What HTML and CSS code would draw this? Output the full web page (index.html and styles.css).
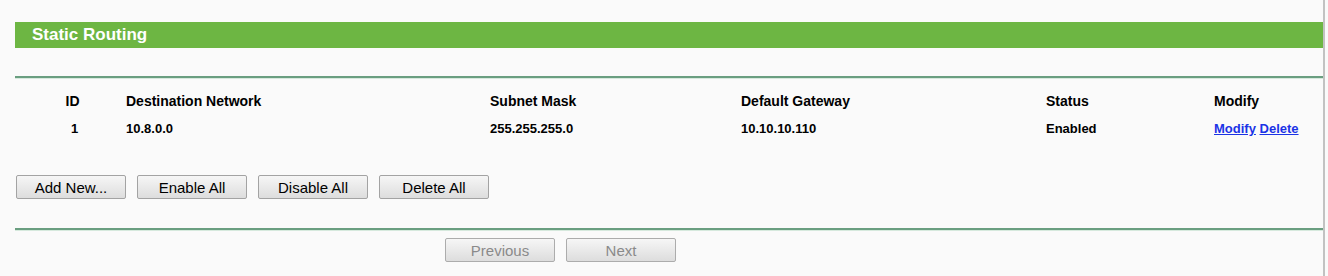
FILE: index.html
```html
<!DOCTYPE html>
<html lang="en">
<head>
  <meta charset="UTF-8">
  <title>Static Routing</title>
  <link rel="stylesheet" href="styles.css">
</head>
<body>
  <div class="page">
    <div class="content">
      <div class="title">Static Routing</div>
      <div class="rule first"></div>

      <div class="routes">
        <div class="cell head id">ID</div>
        <div class="cell head">Destination Network</div>
        <div class="cell head">Subnet Mask</div>
        <div class="cell head">Default Gateway</div>
        <div class="cell head">Status</div>
        <div class="cell head">Modify</div>

        <div class="cell id">1</div>
        <div class="cell">10.8.0.0</div>
        <div class="cell">255.255.255.0</div>
        <div class="cell">10.10.10.110</div>
        <div class="cell">Enabled</div>
        <div class="cell"><a href="#">Modify</a> <a href="#">Delete</a></div>
      </div>

      <div class="actions">
        <button type="button">Add New...</button>
        <button type="button">Enable All</button>
        <button type="button">Disable All</button>
        <button type="button">Delete All</button>
      </div>

      <div class="rule"></div>

      <div class="pager">
        <button type="button" disabled>Previous</button>
        <button type="button" disabled>Next</button>
      </div>
    </div>
  </div>
</body>
</html>
```

FILE: styles.css
```css
body {
  margin: 0;
  padding: 0;
  background-color: #fafafa;
  font-family: "Liberation Sans", Arial, sans-serif;
  color: #000000;
}
.page {
  width: 1323px;
  height: 276px;
  border-right: 2px solid #c2c2c2;
  background-color: #fafafa;
}
.content {
  margin-left: 15px;
  padding-top: 22px;
}
.title {
  height: 26px;
  line-height: 25px;
  padding-left: 17px;
  background-color: #6db643;
  color: #ffffff;
  font-size: 17px;
  font-weight: bold;
}
.rule {
  height: 0;
  border-top: 2px solid #6a9e80;
  border-bottom: 1px solid #d6e9dd;
}
.rule.first {
  margin-top: 28px;
}
.routes {
  display: grid;
  grid-template-columns: 111px 364px 251px 305px 168px 109px;
  grid-auto-rows: 27px;
  padding-top: 9px;
  font-size: 13px;
  font-weight: bold;
}
.cell {
  line-height: 27px;
  white-space: nowrap;
}
.cell.head {
  font-size: 14px;
}
.cell.id {
  text-align: center;
  padding-left: 8px;
}
.cell.head.id {
  padding-left: 4px;
}
.cell a {
  color: #1a33e6;
  text-decoration: underline;
}
.actions {
  display: flex;
  gap: 11px;
  padding-top: 33px;
  padding-bottom: 29px;
  margin-left: 1px;
}
button {
  width: 110px;
  height: 24px;
  padding: 0;
  border: 1px solid #a3a3a3;
  border-radius: 2px;
  background: linear-gradient(#f6f6f6, #dddddd);
  font-family: "Liberation Sans", Arial, sans-serif;
  font-size: 15px;
  color: #000000;
  cursor: pointer;
}
button:disabled {
  color: #8a8a8a;
  border-color: #acacac;
  cursor: default;
}
.pager {
  display: flex;
  gap: 11px;
  padding-top: 7px;
  padding-left: 430px;
}
```
